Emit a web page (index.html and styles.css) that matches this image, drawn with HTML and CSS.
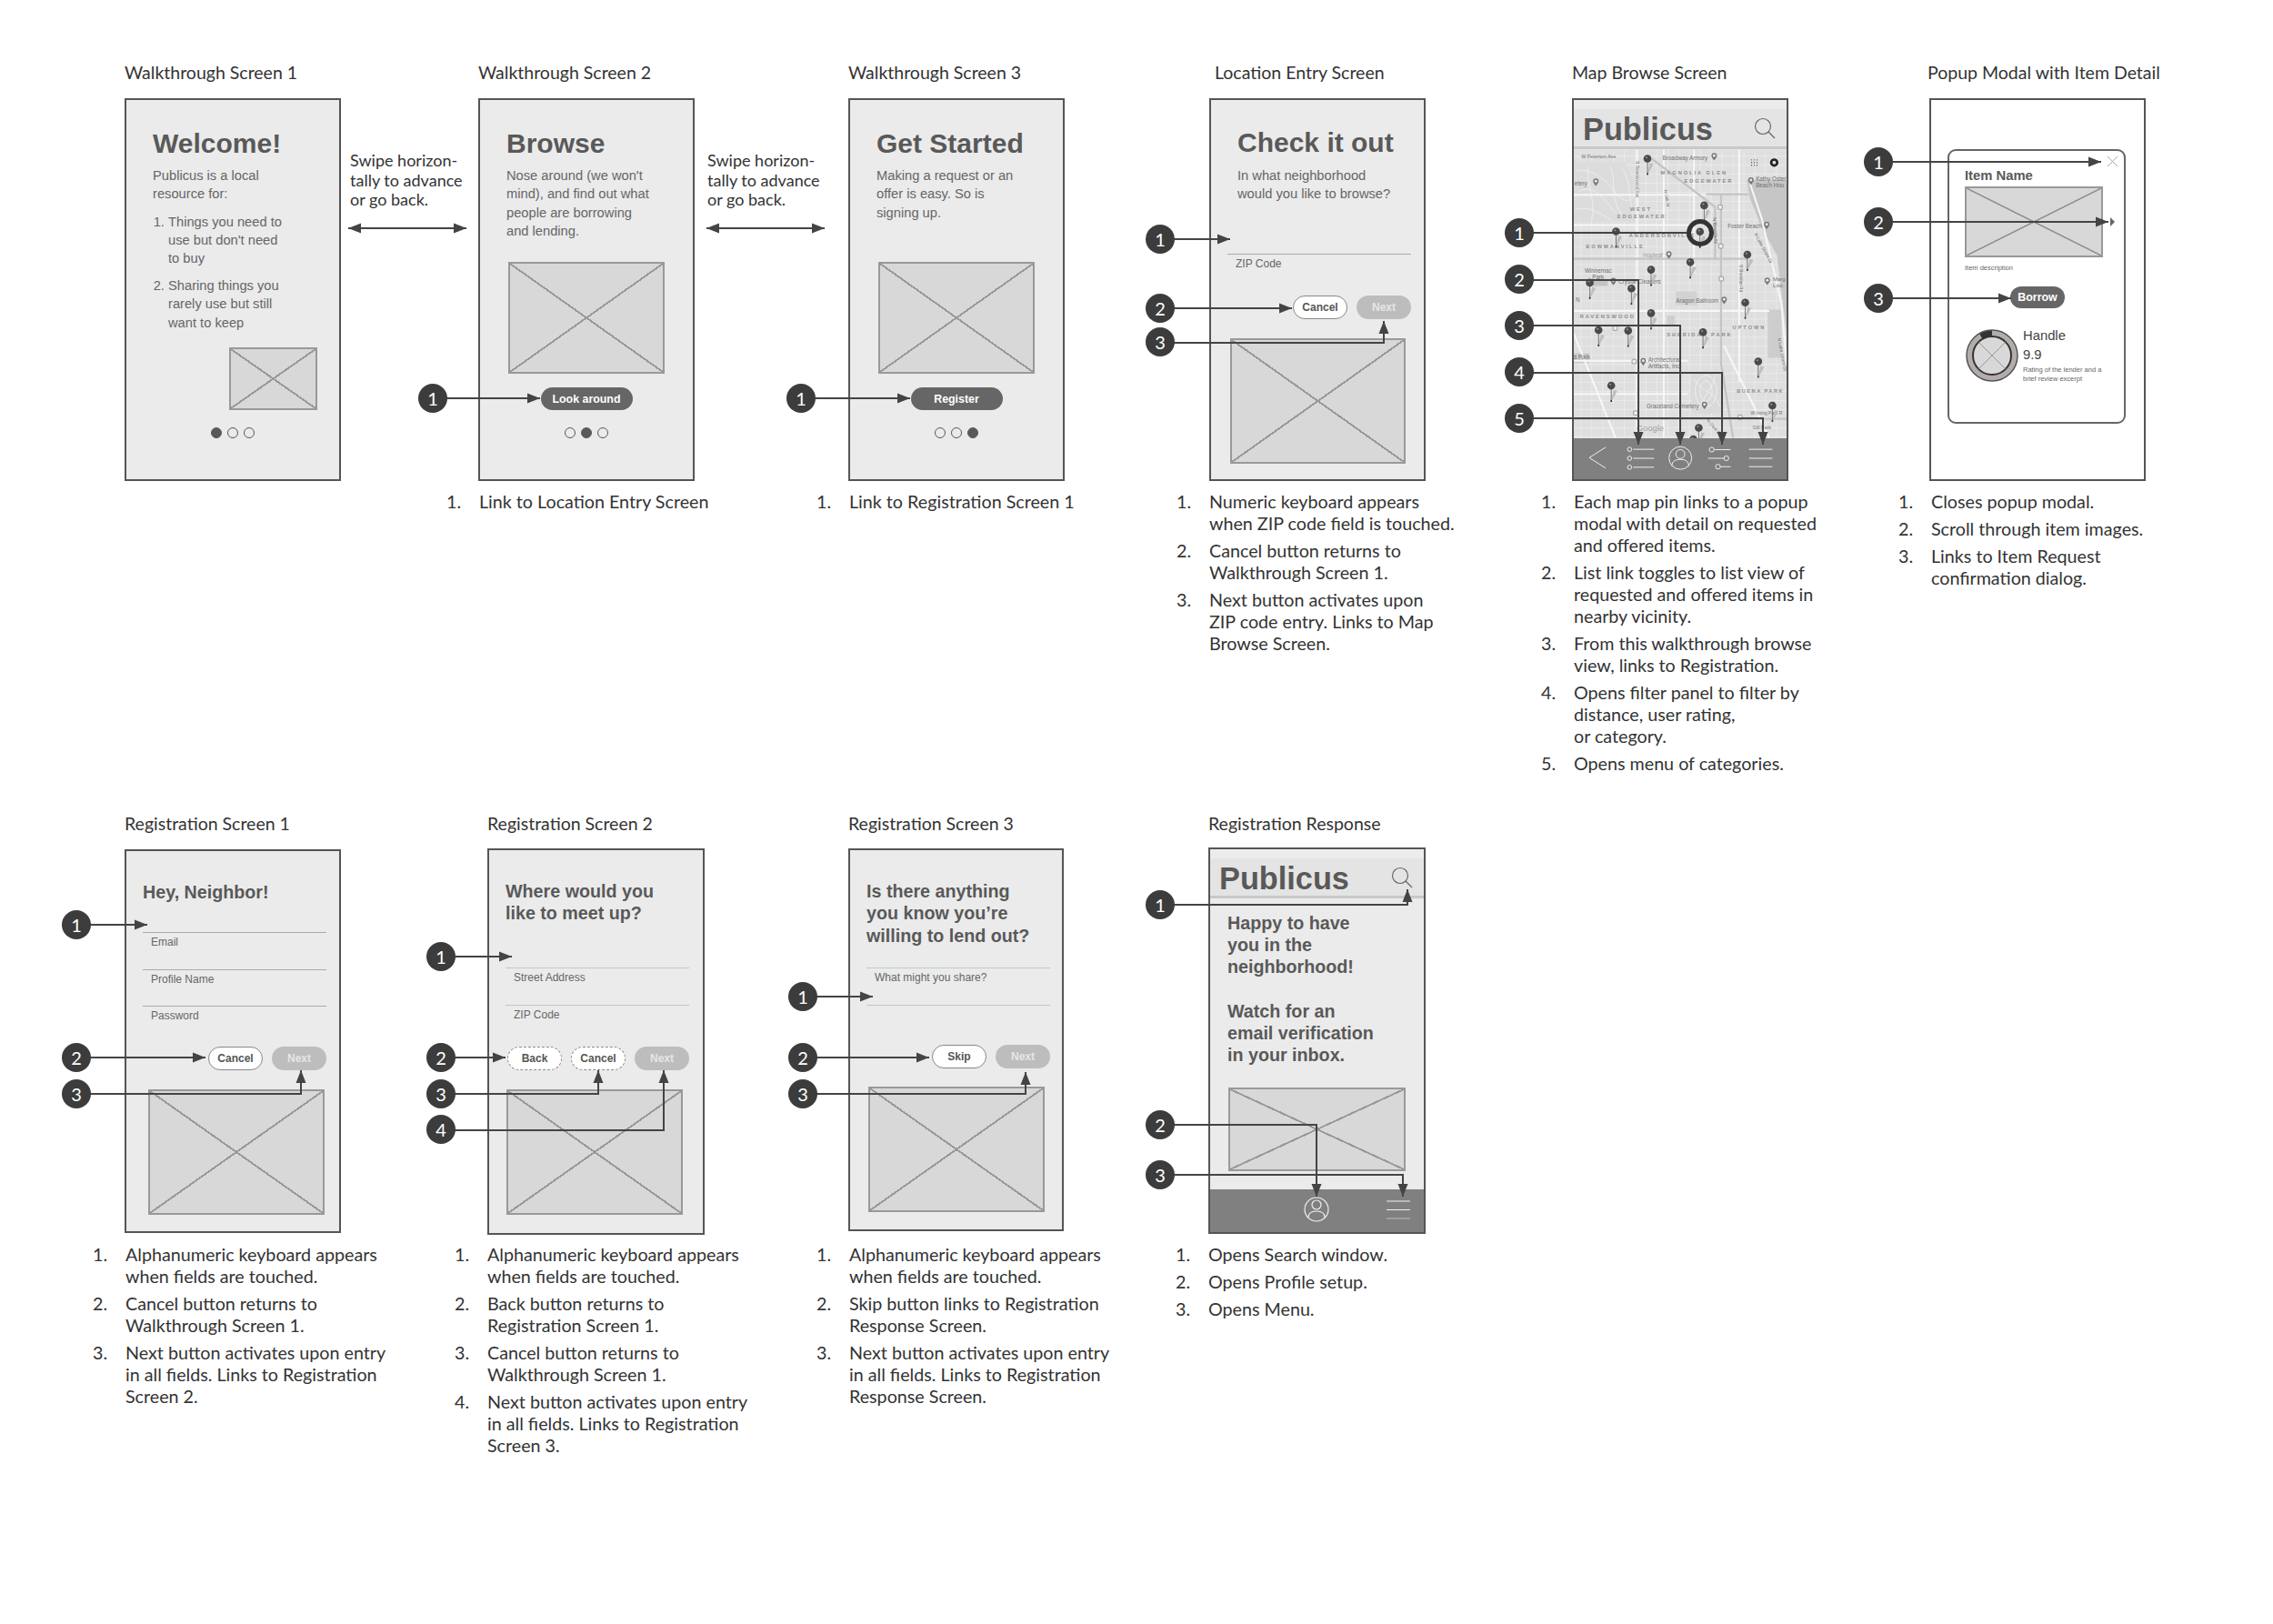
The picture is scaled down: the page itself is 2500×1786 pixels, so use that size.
FILE: index.html
```html
<!DOCTYPE html>
<html lang="en">
<head>
  <meta charset="UTF-8">
  <title>Publicus - Wireframes</title>
  <link rel="stylesheet" href="styles.css">
</head>
<body>
<div class="sheet">

  <!-- first row -->
  <div class="row row-one">
    <section class="col">
      <h1 class="title">Walkthrough Screen 1</h1>
      <div class="slot">
        <div class="phone">
          <div class="copy">
            <h2>Welcome!</h2>
            <p>Publicus is a local<br>resource for:</p>
            <ol class="copy-list">
              <li>Things you need to<br>use but don't need<br>to buy</li>
              <li>Sharing things you<br>rarely use but still<br>want to keep</li>
            </ol>
          </div>
          <div class="ph ph-small"></div>
          <div class="dots"><i class="on"></i><i></i><i></i></div>
        </div>
        <p class="swipe">Swipe horizon-<br>tally to advance<br>or go back.</p>
      </div>
    </section>

    <section class="col">
      <h1 class="title">Walkthrough Screen 2</h1>
      <div class="slot">
        <div class="phone">
          <div class="copy copy-tall">
            <h2>Browse</h2>
            <p>Nose around (we won't<br>mind), and find out what<br>people are borrowing<br>and lending.</p>
          </div>
          <div class="ph ph-wide"></div>
          <div class="btn btn-main">Look around</div>
          <div class="dots"><i></i><i class="on"></i><i></i></div>
        </div>
        <p class="swipe swipe-two">Swipe horizon-<br>tally to advance<br>or go back.</p>
      </div>
      <ol class="notes">
        <li>Link to Location Entry Screen</li>
      </ol>
    </section>

    <section class="col">
      <h1 class="title">Walkthrough Screen 3</h1>
      <div class="slot">
        <div class="phone">
          <div class="copy copy-tall">
            <h2>Get Started</h2>
            <p>Making a request or an<br>offer is easy. So is<br>signing up.</p>
          </div>
          <div class="ph ph-wide"></div>
          <div class="btn btn-main">Register</div>
          <div class="dots"><i></i><i></i><i class="on"></i></div>
        </div>
      </div>
      <ol class="notes">
        <li>Link to Registration Screen 1</li>
      </ol>
    </section>

    <section class="col">
      <h1 class="title title-location">Location Entry Screen</h1>
      <div class="slot">
        <div class="phone">
          <div class="copy copy-location">
            <h2>Check it out</h2>
            <p>In what neighborhood<br>would you like to browse?</p>
          </div>
          <div class="field field-zip">ZIP Code</div>
          <div class="btns btns-location">
            <div class="btn btn-plain">Cancel</div>
            <div class="btn btn-off">Next</div>
          </div>
          <div class="ph ph-location"></div>
        </div>
      </div>
      <ol class="notes notes-back">
        <li><span>Numeric keyboard appears<br>when ZIP code field is touched.</span></li>
        <li><span>Cancel button returns to<br>Walkthrough Screen 1.</span></li>
        <li><span>Next button activates upon<br>ZIP code entry. Links to Map<br>Browse Screen.</span></li>
      </ol>
    </section>

    <section class="col">
      <h1 class="title">Map Browse Screen</h1>
      <div class="slot">
        <div class="phone">
          <div class="strip"></div>
          <header class="app-head">
            <span class="logo">Publicus</span>
            <svg class="search" viewBox="0 0 24 24"><circle cx="10" cy="10" r="8.5"/><line x1="16" y1="16" x2="23" y2="23"/></svg>
          </header>
          <svg class="map" viewBox="302 190 705 955">
            <defs>
              <pattern id="blocks" width="36" height="30" patternUnits="userSpaceOnUse">
                <path d="M0 0H36M0 0V30" stroke="#f3f3f3" stroke-width="3" fill="none"/>
              </pattern>
              <g id="pin">
                <path d="M2 50L20 18L8 14L0 50Z" fill="#bdbdbd"/>
                <line x1="0" y1="8" x2="0" y2="52" stroke="#777" stroke-width="3"/>
                <rect x="-2.5" y="48" width="5" height="6" fill="#333"/>
                <circle r="13" fill="#4a4a4a"/>
                <circle cx="-3" cy="-4" r="3" fill="#999"/>
              </g>
              <g id="poi">
                <path d="M0 14C-6 6-9 3-9-2A9 9 0 0 1 9-2C9 3 6 6 0 14Z" fill="#777"/>
                <circle cy="-2" r="4.5" fill="#e8e8e8"/>
              </g>
              <rect id="stop" x="-7" y="-7" width="14" height="14" rx="2" fill="#eee" stroke="#777" stroke-width="2"/>
            </defs>
            <rect x="302" y="190" width="705" height="955" fill="#dfdfdf"/>
            <rect x="302" y="190" width="705" height="955" fill="url(#blocks)"/>
            <path d="M1007 290H875L885 350L925 450L975 540L1007 800Z" fill="#c6c6c6"/>

            <!-- cemetery and park paths -->
            <path d="M302 232H470L505 300V428H302Z" fill="#dcdcdc"/>
            <g fill="none" stroke="#f0f0f0" stroke-width="2.500">
              <path d="M310 260C350 250 400 280 430 320S480 370 500 345"/>
              <path d="M320 330C360 300 400 350 440 400M350 250C340 300 380 370 360 425M420 245C450 290 410 340 470 420"/>
              <path d="M305 390C350 370 400 410 430 425M460 250C490 280 480 340 500 400"/>
            </g>
            <rect x="690" y="925" width="105" height="140" rx="22" fill="#dadada"/>
            <g fill="none" stroke="#f0f0f0" stroke-width="2.500">
              <ellipse cx="740" cy="990" rx="36" ry="52"/>
              <ellipse cx="740" cy="990" rx="20" ry="34"/>
              <path d="M700 950C730 1000 760 980 785 1040M715 1050C730 1010 770 970 770 935"/>
            </g>
            <rect x="640" y="660" width="70" height="45" fill="#d2d2d2"/>
            <rect x="610" y="740" width="26" height="30" fill="#cfcfcf"/>
            <rect x="302" y="865" width="50" height="32" fill="#c8c8c8"/>
            <rect x="345" y="622" width="70" height="20" fill="#c4c4c4"/>
            <rect x="945" y="720" width="45" height="160" fill="#cdcdcd"/>

            <g fill="none" stroke="#f7f7f7" stroke-width="6">
              <path d="M512 190V1145M600 190V1145M700 190V600M850 190V960"/>
              <path d="M302 340H760M302 440H700M302 725H950M302 890H680M302 1000H680M302 800L440 1145M800 840L950 1145"/>
              <path d="M885 300L925 420L990 700L1007 900"/>
            </g>
            <g fill="none" stroke="#c4c4c4" stroke-width="7">
              <path d="M302 552H880"/>
              <path d="M560 220L770 380V552M790 340V900L830 1145"/>
              <path d="M302 1082H1007"/>
              <path d="M740 338H880"/>
            </g>
            <g class="map-text">
              <text x="327" y="220" font-size="16">W Peterson Ave</text>
              <text x="596" y="224" font-size="19">Broadway Armory</text>
              <text x="905" y="293" font-size="19">Kathy Oster</text>
              <text x="905" y="315" font-size="19">Beach Hou</text>
              <text x="304" y="308" font-size="19">etery</text>
              <text x="812" y="450" font-size="19">Foster Beach</text>
              <text x="531" y="546" font-size="19" class="faint">Hopleaf</text>
              <text x="338" y="597" font-size="19">Winnemac</text>
              <text x="363" y="619" font-size="19">Park</text>
              <text x="450" y="635" font-size="19">Crystal Cleaners</text>
              <text x="640" y="698" font-size="19">Aragon Ballroom</text>
              <text x="302" y="884" font-size="19">s Park</text>
              <text x="548" y="893" font-size="19">Architectural</text>
              <text x="548" y="915" font-size="19">Artifacts, Inc</text>
              <text x="542" y="1046" font-size="19">Graceland Cemetery</text>
              <text x="888" y="1068" font-size="15">W Irving Park R</text>
              <text x="895" y="1117" font-size="16">Gill Park</text>
              <text x="962" y="624" font-size="18">Marg</text>
              <text x="962" y="645" font-size="18">Linc</text>
              <text x="308" y="695" font-size="19">N</text>
              <text x="510" y="1123" font-size="28" class="faint">Google</text>
              <text transform="translate(507 228) rotate(90)" font-size="14">N Ravenswood Ave</text>
              <text transform="translate(601 324) rotate(80)" font-size="14">N Oak St</text>
              <text transform="translate(762 416) rotate(85)" font-size="16">N Broadway</text>
              <text transform="translate(850 570) rotate(90)" font-size="14">N Sheridan Rd</text>
              <text transform="translate(900 470) rotate(62)" font-size="15">N Lake Shore Dr</text>
              <text transform="translate(978 815) rotate(80)" font-size="15">N Lake Shore Dr</text>
              <text transform="translate(742 1088) rotate(50)" font-size="14">N Clark St</text>
            </g>
            <g class="map-area">
              <text x="590" y="274">MAGNOLIA GLEN</text>
              <text x="668" y="300">EDGEWATER</text>
              <text x="488" y="392">WEST</text>
              <text x="446" y="416">EDGEWATER</text>
              <text x="485" y="481">ANDERSONVILLE</text>
              <text x="342" y="517">BOWMANVILLE</text>
              <text x="322" y="748">RAVENSWOOD</text>
              <text x="828" y="786">UPTOWN</text>
              <text x="610" y="810">SHERIDAN PARK</text>
              <text x="842" y="995" class="tight">BUENA PARK</text>
            </g>
            <use href="#poi" x="767" y="212"/>
            <use href="#poi" x="375" y="297"/>
            <use href="#poi" x="889" y="293"/>
            <use href="#poi" x="941" y="440"/>
            <use href="#poi" x="617" y="538"/>
            <use href="#poi" x="433" y="626"/>
            <use href="#poi" x="943" y="625"/>
            <use href="#poi" x="800" y="688"/>
            <use href="#poi" x="532" y="892"/>
            <use href="#poi" x="735" y="1036"/>
            <use href="#stop" x="787" y="381"/>
            <use href="#stop" x="789" y="510"/>
            <use href="#stop" x="791" y="618"/>
            <use href="#stop" x="502" y="892"/>
            <use href="#stop" x="507" y="1063"/>
            <use href="#stop" x="853" y="1077"/>
            <use href="#stop" x="439" y="782"/>
            <use href="#pin" x="546" y="220"/>
            <use href="#pin" x="734" y="375"/>
            <use href="#pin" x="442" y="461"/>
            <use href="#pin" x="720" y="462"/>
            <use href="#pin" x="688" y="563"/>
            <use href="#pin" x="558" y="588"/>
            <use href="#pin" x="877" y="538"/>
            <use href="#pin" x="355" y="631"/>
            <use href="#pin" x="493" y="650"/>
            <use href="#pin" x="558" y="732"/>
            <use href="#pin" x="870" y="697"/>
            <use href="#pin" x="384" y="788"/>
            <use href="#pin" x="482" y="790"/>
            <use href="#pin" x="730" y="795"/>
            <use href="#pin" x="913" y="892"/>
            <use href="#pin" x="426" y="972"/>
            <use href="#pin" x="960" y="1038"/>
            <use href="#pin" x="716" y="1112"/>
            <use href="#pin" x="698" y="1150"/>
            <g fill="#555">
              <circle cx="891" cy="224" r="2"/><circle cx="900" cy="224" r="2"/><circle cx="909" cy="224" r="2"/>
              <circle cx="891" cy="233" r="2"/><circle cx="900" cy="233" r="2"/><circle cx="909" cy="233" r="2"/>
              <circle cx="891" cy="242" r="2"/><circle cx="900" cy="242" r="2"/><circle cx="909" cy="242" r="2"/>
            </g>
            <circle cx="966" cy="233" r="10" fill="#ddd" stroke="#222" stroke-width="8"/>
          </svg>
          <svg class="tabbar tabbar-map" viewBox="302 1145 705 137">
            <path d="M405 1175L350 1210L405 1245"/>
            <circle cx="485" cy="1182" r="7"/><circle cx="485" cy="1212" r="7"/><circle cx="485" cy="1242" r="7"/>
            <path d="M497 1182H567M497 1212H567M497 1242H567"/>
            <circle cx="655" cy="1211" r="38"/>
            <circle cx="655" cy="1198" r="15"/>
            <path d="M627 1238C627 1220 640 1216 655 1216C670 1216 683 1220 683 1238"/>
            <path d="M768 1183H823M748 1212H801M789 1240H823"/>
            <circle cx="760" cy="1183" r="8"/><circle cx="809" cy="1212" r="8"/><circle cx="781" cy="1240" r="8"/>
            <path d="M885 1182H963M885 1212H963M885 1240H963"/>
          </svg>
        </div>
      </div>
      <ol class="notes notes-map">
        <li><span>Each map pin links to a popup<br>modal with detail on requested<br>and offered items.</span></li>
        <li><span>List link toggles to list view of<br>requested and offered items in<br>nearby vicinity.</span></li>
        <li><span>From this walkthrough browse<br>view, links to Registration.</span></li>
        <li><span>Opens filter panel to filter by<br>distance, user rating,<br>or category.</span></li>
        <li><span>Opens menu of categories.</span></li>
      </ol>
    </section>

    <section class="col">
      <h1 class="title title-popup">Popup Modal with Item Detail</h1>
      <div class="slot">
        <div class="phone phone-white">
          <div class="modal">
            <svg class="close" viewBox="0 0 11 11"><path d="M0 0L11 11M11 0L0 11"/></svg>
            <i class="next-tip"></i>
            <h3>Item Name</h3>
            <div class="ph ph-item"></div>
            <p class="fine fine-item">Item description</p>
            <div class="btn btn-main btn-borrow">Borrow</div>
            <div class="lender">
              <svg class="avatar" viewBox="0 0 58 58">
                <circle cx="29" cy="29" r="28" fill="#b2adab" stroke="#555" stroke-width="1.5"/>
                <path d="M16.75 7.78A24.5 24.5 0 0 1 29 4.5" fill="none" stroke="#333" stroke-width="6"/>
                <circle cx="29" cy="29" r="21" fill="#d8d8d8" stroke="#333" stroke-width="2"/>
                <path d="M14.5 14.5L43.5 43.5M43.5 14.5L14.5 43.5" stroke="#999" stroke-width="1"/>
              </svg>
              <div class="lender-text">
                <div class="handle">Handle</div>
                <div class="handle">9.9</div>
                <p class="fine">Rating of the lender and a<br>brief review excerpt</p>
              </div>
            </div>
          </div>
        </div>
      </div>
      <ol class="notes notes-popup">
        <li><span>Closes popup modal.</span></li>
        <li><span>Scroll through item images.</span></li>
        <li><span>Links to Item Request<br>confirmation dialog.</span></li>
      </ol>
    </section>
  </div>

  <!-- second row -->
  <div class="row row-two">
    <section class="col">
      <h1 class="title">Registration Screen 1</h1>
      <div class="slot">
        <div class="phone phone-reg1">
          <div class="ask">
            <h4>Hey, Neighbor!</h4>
          </div>
          <div class="fields">
            <div class="field">Email</div>
            <div class="field">Profile Name</div>
            <div class="field">Password</div>
          </div>
          <div class="btns">
            <div class="btn btn-plain">Cancel</div>
            <div class="btn btn-off">Next</div>
          </div>
          <div class="ph ph-reg ph-reg1"></div>
        </div>
      </div>
      <ol class="notes">
        <li><span>Alphanumeric keyboard appears<br>when fields are touched.</span></li>
        <li><span>Cancel button returns to<br>Walkthrough Screen 1.</span></li>
        <li><span>Next button activates upon entry<br>in all fields. Links to Registration<br>Screen 2.</span></li>
      </ol>
    </section>

    <section class="col">
      <h1 class="title">Registration Screen 2</h1>
      <div class="slot">
        <div class="phone phone-reg2">
          <div class="ask">
            <h4>Where would you<br>like to meet up?</h4>
          </div>
          <div class="fields fields-light">
            <div class="field">Street Address</div>
            <div class="field">ZIP Code</div>
          </div>
          <div class="btns">
            <div class="btn btn-plain btn-dash">Back</div>
            <div class="btn btn-plain btn-dash">Cancel</div>
            <div class="btn btn-off">Next</div>
          </div>
          <div class="ph ph-reg ph-reg2"></div>
        </div>
      </div>
      <ol class="notes notes-back">
        <li><span>Alphanumeric keyboard appears<br>when fields are touched.</span></li>
        <li><span>Back button returns to<br>Registration Screen 1.</span></li>
        <li><span>Cancel button returns to<br>Walkthrough Screen 1.</span></li>
        <li><span>Next button activates upon entry<br>in all fields. Links to Registration<br>Screen 3.</span></li>
      </ol>
    </section>

    <section class="col">
      <h1 class="title">Registration Screen 3</h1>
      <div class="slot">
        <div class="phone phone-reg3">
          <div class="ask">
            <h4>Is there anything<br>you know you’re<br>willing to lend out?</h4>
          </div>
          <div class="fields fields-light">
            <div class="field">What might you share?</div>
            <div class="field"></div>
          </div>
          <div class="btns">
            <div class="btn btn-plain">Skip</div>
            <div class="btn btn-off">Next</div>
          </div>
          <div class="ph ph-reg ph-reg3"></div>
        </div>
      </div>
      <ol class="notes">
        <li><span>Alphanumeric keyboard appears<br>when fields are touched.</span></li>
        <li><span>Skip button links to Registration<br>Response Screen.</span></li>
        <li><span>Next button activates upon entry<br>in all fields. Links to Registration<br>Response Screen.</span></li>
      </ol>
    </section>

    <section class="col">
      <h1 class="title">Registration Response</h1>
      <div class="slot">
        <div class="phone phone-resp">
          <div class="strip"></div>
          <header class="app-head">
            <span class="logo">Publicus</span>
            <svg class="search" viewBox="0 0 24 24"><circle cx="10" cy="10" r="8.5"/><line x1="16" y1="16" x2="23" y2="23"/></svg>
          </header>
          <h4 class="thanks">Happy to have<br>you in the<br>neighborhood!<br><br>Watch for an<br>email verification<br>in your inbox.</h4>
          <div class="ph ph-resp"></div>
          <svg class="tabbar tabbar-resp" viewBox="0 0 235 47">
            <circle cx="117" cy="22" r="13"/>
            <circle cx="117" cy="17" r="5"/>
            <path d="M108 31C108 26 112 24 117 24C122 24 126 26 126 31"/>
            <path d="M194 13H220M194 22.500H220"/>
            <path class="dim" d="M194 32H220"/>
          </svg>
        </div>
      </div>
      <ol class="notes notes-back">
        <li><span>Opens Search window.</span></li>
        <li><span>Opens Profile setup.</span></li>
        <li><span>Opens Menu.</span></li>
      </ol>
    </section>
  </div>

  <!-- callouts sit on top of the screens -->
  <svg class="callouts" viewBox="0 0 2500 1786">
    <defs>
      <marker id="head" markerUnits="userSpaceOnUse" markerWidth="15" markerHeight="12" refX="14" refY="6" orient="auto">
        <path d="M0 0.500L14 6L0 11.500Z" fill="#444"/>
      </marker>
      <marker id="tail" markerUnits="userSpaceOnUse" markerWidth="15" markerHeight="12" refX="0" refY="6" orient="auto">
        <path d="M14 0.500L0 6L14 11.500Z" fill="#444"/>
      </marker>
    </defs>

    <g class="wires">
      <path class="two-way" d="M383 251H513"/>
      <path class="two-way" d="M777 251H907"/>

      <path d="M476 438H594"/>
      <path d="M881 438H1001"/>

      <path d="M1276 263H1353"/>
      <path d="M1276 339H1421"/>
      <path d="M1276 377H1522V353"/>

      <path d="M2066 178H2311"/>
      <path d="M2066 244H2319"/>
      <path d="M2066 328H2212"/>

      <path d="M84 1017H162"/>
      <path d="M84 1163H226"/>
      <path d="M84 1203H331V1177"/>

      <path d="M485 1052H563"/>
      <path d="M485 1163H556"/>
      <path d="M485 1203H658V1177"/>
      <path d="M485 1243H730V1177"/>

      <path d="M883 1096H960"/>
      <path d="M883 1163H1022"/>
      <path d="M883 1203H1128V1179"/>

      <path d="M1276 995H1548V978"/>
      <path d="M1276 1237H1448V1316"/>
      <path d="M1276 1292H1543V1316"/>

      <path d="M1671 308H1802V489"/>
      <path d="M1671 358H1848V489"/>
      <path d="M1671 410H1894V489"/>
      <path d="M1671 460H1939V489"/>
      <path class="no-head" d="M1671 256H1856"/>
    </g>
    <circle class="ring" cx="1870" cy="256" r="12.500"/>

    <g class="dots-num">
      <g><circle cx="476" cy="438" r="16"/><text x="476" y="438">1</text></g>
      <g><circle cx="881" cy="438" r="16"/><text x="881" y="438">1</text></g>

      <g><circle cx="1276" cy="263" r="16"/><text x="1276" y="263">1</text></g>
      <g><circle cx="1276" cy="339" r="16"/><text x="1276" y="339">2</text></g>
      <g><circle cx="1276" cy="376" r="16"/><text x="1276" y="376">3</text></g>

      <g><circle cx="1671" cy="256" r="16"/><text x="1671" y="256">1</text></g>
      <g><circle cx="1671" cy="307" r="16"/><text x="1671" y="307">2</text></g>
      <g><circle cx="1671" cy="358" r="16"/><text x="1671" y="358">3</text></g>
      <g><circle cx="1671" cy="409" r="16"/><text x="1671" y="409">4</text></g>
      <g><circle cx="1671" cy="460" r="16"/><text x="1671" y="460">5</text></g>

      <g><circle cx="2066" cy="178" r="16"/><text x="2066" y="178">1</text></g>
      <g><circle cx="2066" cy="244" r="16"/><text x="2066" y="244">2</text></g>
      <g><circle cx="2066" cy="328" r="16"/><text x="2066" y="328">3</text></g>

      <g><circle cx="84" cy="1017" r="16"/><text x="84" y="1017">1</text></g>
      <g><circle cx="84" cy="1163" r="16"/><text x="84" y="1163">2</text></g>
      <g><circle cx="84" cy="1203" r="16"/><text x="84" y="1203">3</text></g>

      <g><circle cx="485" cy="1052" r="16"/><text x="485" y="1052">1</text></g>
      <g><circle cx="485" cy="1163" r="16"/><text x="485" y="1163">2</text></g>
      <g><circle cx="485" cy="1203" r="16"/><text x="485" y="1203">3</text></g>
      <g><circle cx="485" cy="1242" r="16"/><text x="485" y="1242">4</text></g>

      <g><circle cx="883" cy="1096" r="16"/><text x="883" y="1096">1</text></g>
      <g><circle cx="883" cy="1163" r="16"/><text x="883" y="1163">2</text></g>
      <g><circle cx="883" cy="1203" r="16"/><text x="883" y="1203">3</text></g>

      <g><circle cx="1276" cy="995" r="16"/><text x="1276" y="995">1</text></g>
      <g><circle cx="1276" cy="1237" r="16"/><text x="1276" y="1237">2</text></g>
      <g><circle cx="1276" cy="1292" r="16"/><text x="1276" y="1292">3</text></g>
    </g>
  </svg>
</div>
</body>
</html>
```

FILE: styles.css
```css
* {
  box-sizing: border-box;
}

body {
  margin: 0;
  background: white;
  font-family: "Liberation Sans", Arial, sans-serif;
  color: #595959;
}

.sheet {
  position: relative;
  width: 2500px;
  height: 1786px;
  overflow: hidden;
}

/* rows and columns of the board */

.row {
  display: grid;
  padding-left: 137px;
}

.row-one {
  height: 894px;
  padding-top: 68px;
  grid-template-columns: 389px 407px 397px 399px 393px 238px;
}

.row-two {
  grid-template-columns: 399px 397px 396px 238px;
}

.title {
  margin: 0 0 16px;
  font-family: Lato, sans-serif;
  font-size: 19.500px;
  font-weight: 400;
  line-height: 24px;
  color: #333;
  white-space: nowrap;
}

.row-two .title {
  margin-bottom: 15px;
}

.title-location {
  margin-left: 6px;
}

.title-popup {
  margin-left: -2px;
}

.slot {
  display: flex;
  height: 431.500px;
}

.row-two .slot {
  height: 434.500px;
}

.swipe {
  margin: 58px 0 0 10px;
  font-family: Lato, sans-serif;
  font-size: 18px;
  line-height: 21.500px;
  color: #333;
  white-space: nowrap;
}

.swipe-two {
  margin-left: 14px;
}

.notes {
  margin: 0 0 0 -35px;
  padding: 0;
  list-style: none;
  counter-reset: note;
  font-family: Lato, sans-serif;
  font-size: 19.700px;
  line-height: 24px;
  color: #333;
  white-space: nowrap;
}

.notes-back {
  margin-left: -36px;
}

.notes-map,
.notes-popup {
  margin-left: -34px;
}

.notes li {
  display: flex;
  margin-bottom: 6px;
  counter-increment: note;
}

.notes li::before {
  content: counter(note) ".";
  width: 36px;
  flex: none;
}

/* phone screens */

.phone {
  display: flex;
  flex-direction: column;
  width: 238px;
  height: 421px;
  border: 2px solid #555;
  background: #ebebeb;
}

.phone-white {
  background: white;
}

.phone-reg1 {
  height: 422px;
  margin-top: 1px;
  padding-top: 33px;
}

.phone-reg2 {
  width: 239px;
  height: 425px;
  padding-top: 33px;
}

.phone-reg3 {
  width: 237px;
  height: 421px;
  padding-top: 33px;
}

.phone-resp {
  width: 239px;
  height: 425px;
  margin-top: -1px;
}

.copy {
  padding: 30px 0 0 29px;
}

.copy-tall {
  height: 178px;
}

.copy-location {
  height: 169px;
  padding-top: 29px;
}

.copy h2 {
  margin: 0;
  font-size: 30px;
  line-height: 36px;
}

.copy p {
  margin: 7px 0 0;
  font-size: 14.700px;
  line-height: 20.300px;
  color: #666;
}

.copy-location p {
  margin-top: 8px;
}

.copy-list {
  margin: 10px 0 0;
  padding-left: 17px;
  font-size: 14.700px;
  line-height: 20.300px;
  color: #666;
}

.copy-list li + li {
  margin-top: 9.700px;
}

/* grey placeholder box with the corner to corner cross */

.ph {
  flex: none;
  align-self: center;
  border: 2.500px solid #999;
  background:
    linear-gradient(to top right, transparent calc(50% - 1px), #999 calc(50% - 1px), #999 calc(50% + 1px), transparent calc(50% + 1px)),
    linear-gradient(to bottom right, transparent calc(50% - 1px), #999 calc(50% - 1px), #999 calc(50% + 1px), transparent calc(50% + 1px)),
    #d8d8d8;
}

.ph-small {
  align-self: flex-end;
  width: 97px;
  height: 69px;
  margin: 17px 24px 0 0;
}

.ph-wide {
  width: 172px;
  height: 123px;
}

.ph-location {
  width: 193px;
  height: 138px;
  margin-top: 21px;
}

.ph-reg {
  height: 138px;
  width: 194px;
  margin-top: 21px;
}

.ph-reg1 {
  margin-left: 7px;
}

.ph-reg2 {
  margin-right: 3px;
}

.ph-reg3 {
  margin-top: 20px;
  height: 138px;
}

.ph-resp {
  width: 195px;
  height: 92px;
  margin-top: 24px;
}

.ph-item {
  width: 152px;
  height: 78px;
  margin-top: 3px;
  align-self: flex-start;
}

.dots {
  display: flex;
  align-self: center;
  gap: 6px;
  margin-top: 19px;
}

.dots i {
  width: 12px;
  height: 12px;
  border: 1.500px solid #595959;
  border-radius: 50%;
}

.dots .on {
  background: #595959;
}

/* buttons */

.btn {
  display: flex;
  align-items: center;
  justify-content: center;
  height: 26px;
  width: 60px;
  border-radius: 13px;
  font-size: 12px;
  font-weight: bold;
}

.btn-main {
  align-self: center;
  width: 101px;
  height: 25px;
  margin-top: 15px;
  background: #666;
  color: white;
  font-size: 12.400px;
}

.btn-plain {
  background: white;
  border: 1px solid #888;
  color: #555;
}

.btn-dash {
  border-style: dashed;
}

.btn-off {
  background: #bdbdbd;
  color: #e6e6e6;
}

.btns {
  display: flex;
  justify-content: flex-end;
  gap: 10px;
  width: 202px;
  margin: 4px 0 0 18px;
}

.phone-reg2 .btns {
  margin-top: 5.600px;
}

.btns-location {
  margin-top: 0;
}

/* form fields */

.field {
  height: 40.700px;
  padding-left: 9px;
  border-top: 1px solid #aaa;
  font-size: 12px;
  line-height: 21px;
  color: #666;
}

.field-zip {
  flex: none;
  width: 202px;
  height: 46px;
  margin-left: 18px;
}

.fields {
  width: 202px;
  margin-left: 18px;
}

.fields-light .field {
  border-top-color: #bcc8cc;
}

.ask {
  height: 56px;
  padding-left: 18px;
}

.phone-reg2 .ask,
.phone-reg3 .ask {
  height: 96px;
}

.ask h4 {
  margin: 0;
  font-size: 19.700px;
  line-height: 24.300px;
}

.phone-reg1 .ask h4 {
  line-height: 24px;
}

/* app header and tab bar */

.strip {
  flex: none;
  height: 10px;
  background: #ececec;
}

.app-head {
  flex: none;
  display: flex;
  align-items: center;
  justify-content: space-between;
  height: 44px;
  padding: 0 12px 0 10px;
  background: #e4e4e4;
  border-bottom: 3px solid #c8c8c8;
}

.logo {
  padding-top: 3px;
  font-size: 34.300px;
  font-weight: bold;
  line-height: 41px;
}

.search {
  width: 24px;
  height: 24px;
  fill: none;
  stroke: #666;
  stroke-width: 1.200;
}

.map {
  display: block;
  flex: none;
  width: 234px;
  height: 318px;
}

.map-text text {
  font-family: "Liberation Sans", sans-serif;
  fill: #707070;
}

.map-text .faint {
  fill: #a0a0a0;
}

.map-area text {
  font-family: "Liberation Sans", sans-serif;
  font-size: 17px;
  font-weight: bold;
  letter-spacing: 6px;
  fill: #8c8c8c;
}

.map-area .tight {
  letter-spacing: 4.500px;
}

.tabbar {
  display: block;
  flex: none;
  background: #808080;
  fill: none;
}

.tabbar-map {
  width: 234px;
  height: 45px;
  stroke: #f0f0f0;
  stroke-width: 3;
}

.tabbar-resp {
  width: 235px;
  height: 47px;
  margin-top: auto;
  stroke: #f0f0f0;
  stroke-width: 1.200;
}

.tabbar-resp .dim {
  stroke: #b5b5b5;
}

.thanks {
  margin: 15px 0 0 19px;
  font-size: 19.700px;
  line-height: 24.200px;
}

/* popup modal */

.modal {
  position: relative;
  width: 196px;
  height: 302px;
  margin: 54px 0 0 18px;
  padding: 18px 0 0 17px;
  border: 2.500px solid #666;
  border-radius: 9px;
}

.modal h3 {
  margin: 0;
  font-size: 14.800px;
  line-height: 18px;
}

.close {
  position: absolute;
  top: 6px;
  right: 7px;
  width: 11px;
  height: 11px;
  fill: none;
  stroke: #aaa;
  stroke-width: 1;
}

.next-tip {
  position: absolute;
  top: 73px;
  right: 10px;
  border-left: 5px solid #666;
  border-top: 5px solid transparent;
  border-bottom: 5px solid transparent;
}

.fine {
  margin: 0;
  font-size: 7.500px;
  line-height: 10px;
  color: #666;
}

.fine-item {
  margin-top: 7px;
}

.btn-borrow {
  align-self: auto;
  width: 60px;
  height: 24px;
  margin: 15px 0 0 50px;
}

.lender {
  display: flex;
  gap: 5px;
  margin: 23px 0 0 1px;
}

.avatar {
  width: 58px;
  height: 58px;
}

.lender-text {
  margin-top: -3px;
}

.handle {
  font-size: 14.800px;
  line-height: 20.500px;
  color: #444;
}

.lender-text .fine {
  margin-top: 2px;
}

/* numbered callouts over the screens */

.callouts {
  position: absolute;
  top: 0;
  left: 0;
  width: 2500px;
  height: 1786px;
  pointer-events: none;
}

.wires path {
  fill: none;
  stroke: #444;
  stroke-width: 2;
  marker-end: url(#head);
}

.wires .two-way {
  marker-start: url(#tail);
}

.wires .no-head {
  marker-end: none;
}

.ring {
  fill: none;
  stroke: #333;
  stroke-width: 5;
}

.dots-num circle {
  fill: #3c3c3c;
}

.dots-num text {
  font-family: Lato, sans-serif;
  font-size: 20px;
  fill: white;
  text-anchor: middle;
  dominant-baseline: central;
}
```
